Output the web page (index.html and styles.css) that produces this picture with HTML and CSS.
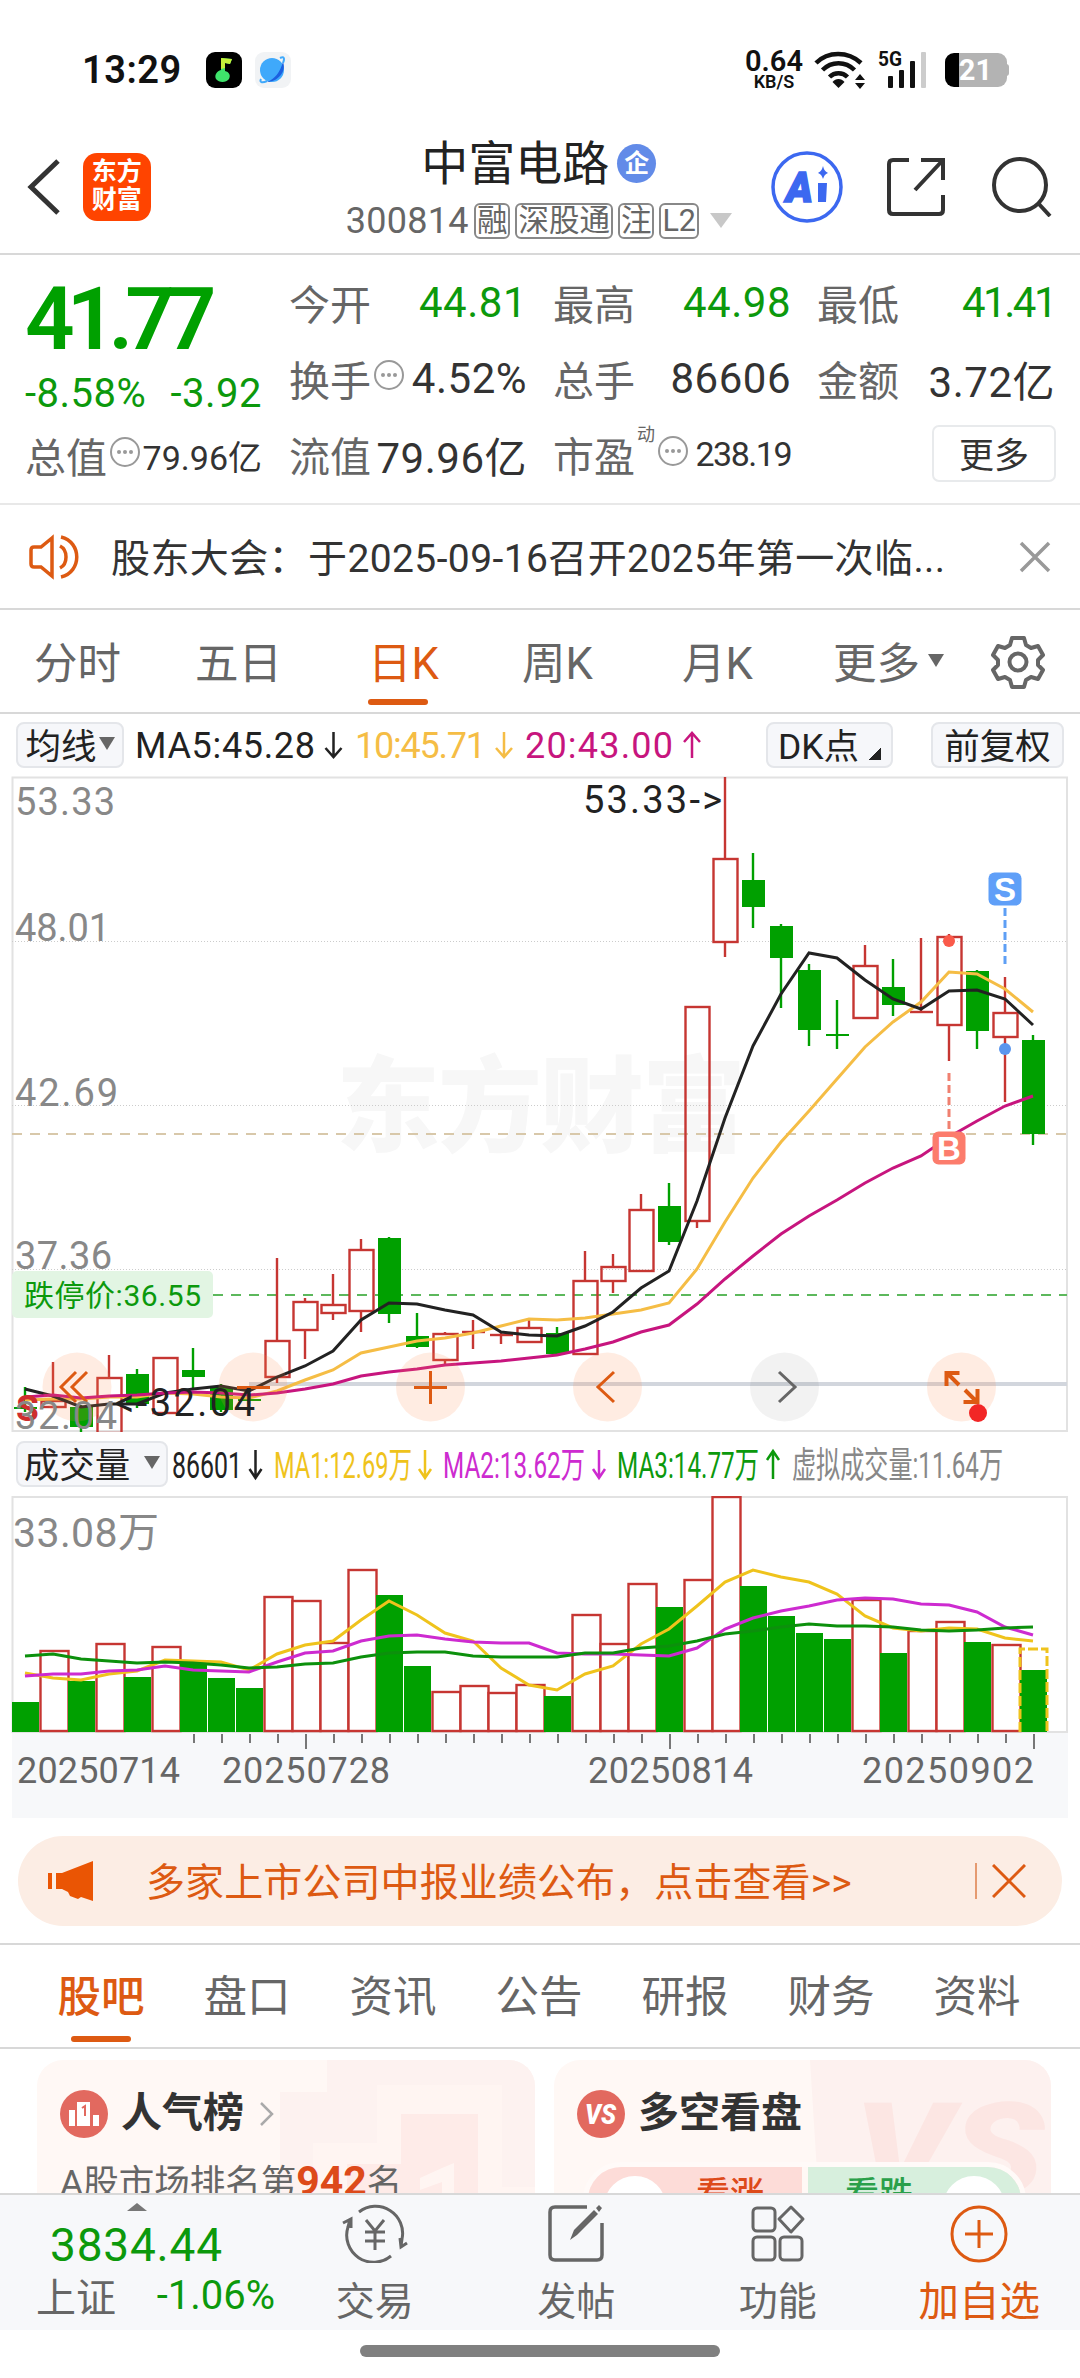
FILE: index.html
```html
<!DOCTYPE html>
<html lang="zh-CN">
<head>
  <meta charset="utf-8">
  <title>中富电路 300814</title>
  <meta name="viewport" content="width=device-width, initial-scale=1">
  <link rel="stylesheet" href="styles.css">
</head>
<body>
  <div class="status-bar">
    <span class="clock">13:29</span>
    <svg class="app-icon" width="36" height="36" viewBox="0 0 36 36"><rect width="36" height="36" rx="9" fill="#000"/><path d="M15 6l11 1-2 5-5-1v8c4 1 6 4 4 8-3 4-10 4-13 0-2-4 1-8 5-9z" fill="#3fe36b"/><path d="M15 6l11 1-2 5-5-1v5l-4 1z" fill="#c6f03a"/></svg>
    <svg class="app-icon" width="36" height="36" viewBox="0 0 36 36"><rect width="36" height="36" rx="9" fill="#f1f3f5"/><circle cx="17" cy="18" r="12" fill="#3fa9fb"/><path d="M28 10c4 10-6 20-16 20C20 27 25 20 28 10z" fill="#1c5fe0"/><path d="M6 27C4 31 8 31 12 29M25 6c4-2 5 0 3 5" stroke="#3fa9fb" stroke-width="2" fill="none"/></svg>
    <div class="net-speed"><b>0.64</b><span>KB/S</span></div>
    <svg class="wifi" width="52" height="38" viewBox="0 0 52 38" fill="none" stroke="#111" stroke-width="4.5"><path d="M2 12C14 0 34 0 47 12M8.500 19c9-9 23-9 32 0M15.500 26c5-5 13-5 18 0"/><path d="M24.500 37l-6-6c3-4 9-4 12 0z" fill="#111" stroke="none"/><path d="M41 29l5-6 5 6zM41 32h10l-5 6z" fill="#111" stroke="none"/></svg>
    <svg width="50" height="38" viewBox="0 0 50 38" fill="#111"><text x="0" y="15" class="net-type" textLength="24" lengthAdjust="spacingAndGlyphs">5G</text><rect x="10" y="25" width="5" height="12" rx="1"/><rect x="21" y="19" width="5" height="18" rx="1"/><rect x="32" y="10" width="5" height="27" rx="1"/><rect x="43" y="1" width="5" height="36" rx="1" fill="#ccc"/></svg>
    <div class="battery"><span>21</span></div>
  </div>

  <header class="header">
    <svg class="back" width="34" height="56" viewBox="0 0 34 56"><path d="M31 2L4 28l27 26" fill="none" stroke="#333" stroke-width="5"/></svg>
    <div class="logo">东方<br>财富</div>
    <div class="stock">
      <div class="stock-name">中富电路<span class="corp">企</span></div>
      <div class="stock-code"><span>300814</span><i>融</i><i>深股通</i><i>注</i><i>L2</i><em></em></div>
    </div>
    <svg class="ai" width="72" height="72" viewBox="0 0 72 72"><circle cx="36" cy="36" r="34" fill="none" stroke="#3c68f0" stroke-width="3.500"/><text x="15" y="51" textLength="27" lengthAdjust="spacingAndGlyphs">A</text><path d="M47 32h9l-1 19h-8zM52 15c1 4 2 5 5 7-3 1-4 3-5 6-1-3-2-5-5-6 3-2 4-3 5-7z" fill="#3c68f0"/></svg>
    <svg class="share" width="60" height="60" viewBox="0 0 60 60" fill="none" stroke="#333" stroke-width="4"><path d="M22 3H6q-4 0-4 4v46q0 4 4 4h46q4 0 4-4V38M34 3h22v20M56 3L28 33"/></svg>
    <svg width="60" height="60" viewBox="0 0 60 60" fill="none" stroke="#333" stroke-width="4"><circle cx="28" cy="28" r="26"/><path d="M46 46l12 13"/></svg>
  </header>

  <section class="quote">
    <div class="price-col">
      <div class="price">41.77</div>
      <div class="change"><span>-8.58%</span><span>-3.92</span></div>
      <div class="cell small"><label>总值</label><u class="tip"></u><b>79.96亿</b></div>
    </div>
    <div class="quote-grid">
      <div class="cell down"><label>今开</label><b>44.81</b></div>
      <div class="cell down"><label>最高</label><b>44.98</b></div>
      <div class="cell down narrow"><label>最低</label><b>41.41</b></div>
      <div class="cell"><label>换手</label><u class="tip"></u><b>4.52%</b></div>
      <div class="cell"><label>总手</label><b>86606</b></div>
      <div class="cell"><label>金额</label><b>3.72亿</b></div>
      <div class="cell"><label>流值</label><b>79.96亿</b></div>
      <div class="cell small pe"><label>市盈</label><sup>动</sup><u class="tip"></u><b>238.19</b></div>
      <div class="cell"><button class="more">更多</button></div>
    </div>
  </section>

  <div class="news">
    <svg width="52" height="46" viewBox="0 0 52 46" fill="none" stroke="#dd5a12" stroke-width="3.500"><path d="M23 4L12 13H5q-3 0-3 3v14q0 3 3 3h7l11 9z"/><path d="M31 12c8 4 8 18 0 22M32 3c21 5 21 35 0 40"/></svg>
    <p>股东大会：于2025-09-16召开2025年第一次临...</p>
    <svg class="close" width="32" height="32" viewBox="0 0 32 32"><path d="M2 2l28 28M30 2L2 30" stroke="#999" stroke-width="3.500"/></svg>
  </div>

  <nav class="period">
    <span>分时</span><span>五日</span><span class="on">日K</span><span>周K</span><span>月K</span><span>更多<em></em></span>
    <svg width="54" height="54" viewBox="0 0 54 54" fill="none" stroke="#666" stroke-width="4"><path d="M21 3h12l2 7 5 3 7-2 5 9-5 5v5l5 5-5 9-7-2-5 3-2 7H21l-2-7-5-3-7 2-5-9 5-5v-5l-5-5 5-9 7 2 5-3z" stroke-linejoin="round"/><circle cx="27" cy="27" r="8.500"/></svg>
  </nav>

  <div class="ma-row">
    <span class="btn ma-btn">均线<em></em></span>
    <svg width="590" height="62" viewBox="130 715 590 62">
      <text class="lg" fill="#222" x="135" y="759" textLength="180">MA5:45.28</text>
      <path class="arr" stroke="#222" d="M333.500 733v25m-8-9l8 9 8-9"/>
      <text class="lg" fill="#f5bd45" x="355" y="759" textLength="131">10:45.71</text>
      <path class="arr" stroke="#f5bd45" d="M504 733v25m-8-9l8 9 8-9"/>
      <text class="lg" fill="#c7157e" x="525" y="759" textLength="148">20:43.00</text>
      <path class="arr" stroke="#c7157e" d="M692 759v-25m-8 9l8-9 8 9"/>
    </svg>
    <span class="btn dk-btn">DK点<em></em></span>
    <span class="btn">前复权</span>
  </div>

  <svg id="kline" class="chart" width="1080" height="656" viewBox="0 776 1080 656">
    <text class="watermark" x="336" y="1144" textLength="410">东方财富</text>
    <path class="frame" d="M12.500 777.500H1067V1431H12.500z"/>
    <path class="grid" d="M12 941.500H1067M12 1105.500H1067M12 1269.500H1067"/>
    <path class="last-price" d="M12 1134H1067"/>
    <path class="limit-price" d="M213 1295H1067"/>
    <path d="M249 1384H1067" stroke="#d2d6dd" stroke-width="4"/>
    <g id="candles"></g>
    <g class="axis-label">
      <text x="15" y="815" textLength="100">53.33</text>
      <text x="15" y="941" textLength="95">48.01</text>
      <text x="15" y="1106" textLength="103">42.69</text>
      <text x="15" y="1269" textLength="97">37.36</text>
    </g>
    <rect x="12" y="1271" width="201" height="47" rx="5" fill="#e2f5e3"/>
    <text class="limit-text" x="24" y="1306" textLength="177">跌停价:36.55</text>
    <g class="tools">
      <circle cx="77" cy="1387" r="34.500"/><circle cx="253" cy="1387" r="34.500"/><circle cx="430.500" cy="1387" r="34.500"/><circle cx="607.500" cy="1387" r="34.500"/><circle class="off" cx="784.500" cy="1387" r="34.500"/><circle cx="961.500" cy="1387" r="34.500"/>
      <path d="M76 1372l-15 15 15 15M87 1372l-15 15 15 15M237 1387.500h33M414 1387.500h33M430.500 1371v33M614 1372l-16 15 16 15"/>
      <path stroke="#666" d="M779 1372l16 15-16 15"/>
      <path class="expand" d="M946.500 1386v-13h13M947 1373l12 12M977.500 1389v13h-14M977 1402l-12-12"/>
      <circle class="dot" cx="978" cy="1413" r="9"/>
    </g>
    <text class="s-mark" x="16" y="1421">S</text>
    <g class="axis-label"><text x="15" y="1429" textLength="102">32.04</text></g>
    <g class="peak"><text x="583" y="813" textLength="139">53.33-&gt;</text><text x="115" y="1416" textLength="140">&lt;-32.04</text></g>
    <g class="signal">
      <path stroke="#5e9ff5" d="M1005 908v57"/><path stroke="#f08070" d="M949 1073v58"/>
      <rect x="988.500" y="872.500" width="33" height="33" rx="6" fill="#5f9ff8"/><text x="1005" y="901">S</text>
      <rect x="932.500" y="1131.500" width="33" height="33" rx="6" fill="#fc7c6c"/><text x="949" y="1160">B</text>
      <circle cx="949" cy="941" r="6" fill="#fa5a4a"/><circle cx="1005" cy="1049" r="6" fill="#5a96ee"/>
    </g>
  </svg>

  <div class="vol-row">
    <span class="btn vol-btn">成交量<em></em></span>
    <svg width="850" height="64" viewBox="168 1433 850 64">
      <g class="lg">
        <text fill="#222" x="172" y="1479" textLength="70" lengthAdjust="spacingAndGlyphs">86601</text>
        <path class="arr" stroke="#222" d="M255.500 1451v28m-6-9l6 9 6-9"/>
        <text fill="#efc31c" x="274" y="1479" textLength="138" lengthAdjust="spacingAndGlyphs">MA1:12.69万</text>
        <path class="arr" stroke="#efc31c" d="M425 1451v28m-6-9l6 9 6-9"/>
        <text fill="#cd2bd0" x="443" y="1479" textLength="142" lengthAdjust="spacingAndGlyphs">MA2:13.62万</text>
        <path class="arr" stroke="#cd2bd0" d="M599 1451v28m-6-9l6 9 6-9"/>
        <text fill="#0c990c" x="617" y="1479" textLength="142" lengthAdjust="spacingAndGlyphs">MA3:14.77万</text>
        <path class="arr" stroke="#0c990c" d="M773 1480v-28m-6 9l6-9 6 9"/>
        <text fill="#888" x="792" y="1479" textLength="211" lengthAdjust="spacingAndGlyphs">虚拟成交量:11.64万</text>
      </g>
    </svg>
  </div>

  <svg id="volume" class="chart" width="1080" height="322" viewBox="0 1497 1080 322">
    <rect x="12" y="1734" width="1056" height="85" fill="#f7f8fa"/>
    <path class="frame" d="M12.500 1498H1067V1733H12.500z"/>
    <g id="bars"></g>
    <path d="M1020 1733V1650H1047V1733" fill="none" stroke="#efc31c" stroke-width="3" stroke-dasharray="10 3"/>
    <g class="axis-label vol-max"><text x="13" y="1548" textLength="146">33.08万</text></g>
    <g class="date">
      <text x="17" y="1784" textLength="163">20250714</text>
      <text x="222" y="1784" textLength="168">20250728</text>
      <text x="588" y="1784" textLength="165">20250814</text>
      <text x="862" y="1784" textLength="172">20250902</text>
    </g>
  </svg>

  <div class="banner">
    <svg width="46" height="40" viewBox="0 0 46 40" fill="#ea5504"><path d="M0 12h4v16H0zM8 12h6L45 0v40l-12-4-3 2-8-3-2-4-6-3H8z"/></svg>
    <p>多家上市公司中报业绩公布，点击查看&gt;&gt;</p>
    <i></i>
    <svg width="34" height="34" viewBox="0 0 34 34"><path d="M1 1l32 32M33 1L1 33" stroke="#dd5a12" stroke-width="3"/></svg>
  </div>

  <nav class="sections">
    <span class="on">股吧</span><span>盘口</span><span>资讯</span><span>公告</span><span>研报</span><span>财务</span><span>资料</span>
  </nav>

  <div class="cards">
    <div class="card">
      <svg class="card-bg" width="498" height="160" viewBox="0 0 498 160"><path d="M290 0h208v160H243V32h47z" fill="#fdf2f0"/><path d="M276 160V83h64V25h125v102h33v33z" fill="#fff5f2"/><path d="M310 160v-56h54V54h77v106z" fill="#feebe8"/><path d="M405 108l12-5v57h-12v-38l-22 8v-12z" fill="#fff5f2"/></svg>
      <div class="card-title">
        <svg width="48" height="48" viewBox="0 0 48 48"><circle cx="24" cy="24" r="24" fill="#e2695f"/><path d="M9 20h6v16H9zM17 12h13v24H17zM33 25h6v11h-6z" fill="#fff"/><path d="M22 18l3-2v10" stroke="#e2695f" stroke-width="2" fill="none"/></svg>
        <b>人气榜</b>
        <svg width="16" height="26" viewBox="0 0 16 26"><path d="M2 2l11 11L2 24" fill="none" stroke="#aaa" stroke-width="2.500"/></svg>
      </div>
      <p>A股市场排名第<strong>942</strong>名</p>
    </div>
    <div class="card">
      <svg class="card-bg" width="498" height="160" viewBox="0 0 498 160"><path d="M256 0h242v160H266z" fill="#fdf1ef"/><text x="300" y="135" textLength="190" lengthAdjust="spacingAndGlyphs">VS</text></svg>
      <div class="card-title">
        <svg width="48" height="48" viewBox="0 0 48 48"><circle cx="24" cy="24" r="24" fill="#e2695f"/><text class="vs" x="8" y="34" textLength="31" lengthAdjust="spacingAndGlyphs">VS</text></svg>
        <b>多空看盘</b>
      </div>
      <div class="vote"><div class="up">看涨</div><div class="dn">看跌</div></div>
    </div>
  </div>

  <footer class="toolbar">
    <div class="index">
      <em></em>
      <b>3834.44</b>
      <div><span>上证</span><i>-1.06%</i></div>
    </div>
    <div class="tool">
      <svg width="66" height="60" viewBox="0 0 66 60" fill="none" stroke="#666" stroke-width="3"><path d="M17 9a27 27 0 0 1 43 27l-1 7M49 53A27 27 0 0 1 6 24l2-8M1 20l8-4v9M65 40l-6 4-1-9M24 17l9 11 9-11M33 28v19M23 29h20M23 38h20"/></svg>
      <span>交易</span>
    </div>
    <div class="tool">
      <svg width="58" height="60" viewBox="0 0 58 60" fill="none" stroke="#666" stroke-width="3.500"><path d="M40 4H8q-5 0-5 5v43q0 5 5 5h42q5 0 5-5V20"/><path d="M23 37l4-10L47 7l4 4-21 21zM49 5l3-3 3 3-3 4z" fill="#666" stroke="none"/></svg>
      <span>发帖</span>
    </div>
    <div class="tool">
      <svg width="56" height="60" viewBox="0 0 56 60" fill="none" stroke="#666" stroke-width="3"><rect x="3" y="5" width="22" height="23" rx="4"/><rect x="3" y="34" width="22" height="23" rx="4"/><rect x="30" y="34" width="22" height="23" rx="4"/><path d="M41 4l12 12-12 13-12-13z" stroke-linejoin="round"/></svg>
      <span>功能</span>
    </div>
    <div class="tool add">
      <svg width="60" height="60" viewBox="0 0 60 60" fill="none" stroke="#dd5a12" stroke-width="3"><circle cx="30" cy="31" r="27"/><path d="M30 17v28M16 31h28"/></svg>
      <span>加自选</span>
    </div>
  </footer>
  <div class="home-bar"></div>
  <script src="chart.js"></script>
</body>
</html>
```

FILE: styles.css
```css
* {box-sizing: border-box;}
body {margin: 0; width: 1080px; height: 2378px; overflow: hidden; background: #fff; color: #333; font-family: Roboto, "Noto Sans CJK SC", sans-serif;}
p {margin: 0;}
svg {display: block; flex: none;}
i, em {font-style: normal;}

.status-bar {display: flex; align-items: center; height: 140px; padding: 0 73px 0 82px; color: #111;}
.clock {width: 124px; font-size: 38px; font-weight: 600; letter-spacing: 0.5px;}
.app-icon {margin-right: 13px;}
.net-speed {display: flex; flex-direction: column; align-items: center; width: 62px; margin-left: auto; line-height: 1;}
.net-speed b {font-size: 29px; font-weight: 600; line-height: 28px; margin-top: -4px;}
.net-speed span {font-size: 18px; font-weight: 600; line-height: 14px;}
.wifi {margin: 0 12px 0 9px;}
.net-type {font-size: 20px; font-weight: 700;}
.battery {display: flex; align-items: center; justify-content: center; width: 62px; height: 34px; margin-left: 17px; border-radius: 9px; background: linear-gradient(90deg, #000 14px, #b3b3b3 14px); color: #fff; font-size: 29px; font-weight: 700;}
.battery::after {content: ""; width: 4px; height: 12px; margin-right: -16px; margin-left: 13px; border-radius: 0 3px 3px 0; background: #b3b3b3;}

.header {display: flex; align-items: center; height: 115px; padding: 0 28px 20px 27px; border-bottom: 2px solid #d8d8d8;}
.logo {width: 68px; height: 68px; margin-left: 22px; border-radius: 14px; background: #ff4400; color: #fff; font-size: 25px; font-weight: 700; line-height: 28px; text-align: center; padding-top: 5px;}
.stock {display: flex; flex-direction: column; align-items: center; width: 394px; margin: 0 36px 0 192px; padding-top: 12px;}
.stock-name {display: flex; align-items: center; height: 56px; font-size: 47px; color: #222; line-height: 56px;}
.corp {display: flex; align-items: center; justify-content: center; width: 39px; height: 39px; margin-left: 8px; border-radius: 50%; background: #628be8; color: #fff; font-size: 25px; font-weight: 700;}
.stock-code {display: flex; align-items: center; height: 58px; color: #666; font-size: 36px; gap: 5px;}
.stock-code span {letter-spacing: 0.3px;}
.stock-code i {height: 36px; padding: 0 1px; border: 2px solid #888; border-radius: 6px; font-size: 30.500px; line-height: 31px; white-space: nowrap;}
.stock-code em {margin-left: 6px; border: 11px solid transparent; border-top: 15px solid #c8c8c8; border-bottom: 0;}
.ai text {fill: #3c68f0; stroke: #3c68f0; stroke-width: 1.500; font: italic 900 42px Roboto;}
.share {margin: 0 45px 0 44px;}

.quote {display: flex; height: 250px; padding: 11px 25px 0; border-bottom: 2px solid #e8e8e8;}
.price-col {width: 237px; margin-right: 27px;}
.price {height: 96px; color: #00a000; font-size: 87px; font-weight: 600; line-height: 106px; letter-spacing: -8px;}
.change {display: flex; justify-content: space-between; height: 56px; color: #0c990c; font-size: 40px; line-height: 64px; letter-spacing: 0.5px;}
.quote-grid {display: grid; grid-template-columns: repeat(3, 238px); grid-auto-rows: 76px; column-gap: 26px;}
.cell {display: flex; align-items: center; height: 72px;}
.price-col .cell {height: 74px;}
.cell label {color: #666; font-size: 41px;}
.cell b {margin-left: auto; font-size: 42px; font-weight: 400; letter-spacing: 0.5px; white-space: nowrap;}
.narrow b {letter-spacing: -2.500px;}
.down b {color: #0c990c;}
.small b {font-size: 34px; letter-spacing: 0;}
.pe b {letter-spacing: -1.500px;}
.cell sup {align-self: flex-start; margin-left: 2px; color: #666; font-size: 18px; line-height: 34px;}
.tip {display: flex; align-items: center; justify-content: center; width: 30px; height: 30px; margin: -6px 0 0 3px; border: 2px solid #999; border-radius: 50%; text-decoration: none;}
.tip::after {content: ""; width: 4px; height: 4px; border-radius: 50%; background: #999; box-shadow: -6px 0 #999, 6px 0 #999;}
.more {width: 124px; height: 57px; margin: 0 -1px 2px auto; border: 2px solid #e8eaec; border-radius: 7px; background: #fff; color: #333; font: 35px "Noto Sans CJK SC"; line-height: 48px;}

.news {display: flex; align-items: center; height: 105px; padding: 0 29px; border-bottom: 2px solid #d8d8d8; font-size: 39px;}
.news p {margin: -3px 0 0 30px; letter-spacing: 0.4px; white-space: nowrap;}
.close {margin-left: auto;}

.period {display: grid; grid-template-columns: 161px 173px 154px 160px 151px 158px 54px; align-items: center; height: 104px; padding-left: 34px; border-bottom: 2px solid #d8d8d8; color: #666; font-size: 43.500px;}
.period span {display: flex; align-items: center; height: 104px; padding-bottom: 3px;}
.period em, .btn em {margin-left: 8px; border: 8px solid transparent; border-top: 13px solid #666; border-bottom: 0;}
.period .on, .sections .on {position: relative; color: #dd5a12;}
.period .on::after, .sections .on::after {content: ""; position: absolute; left: 0; bottom: 9px; width: 60px; height: 6px; border-radius: 3px; background: #dd5a12;}

.btn {display: flex; align-items: center; justify-content: center; height: 46px; padding-bottom: 3px; border: 2px solid #e4e6ea; border-radius: 8px; background: #f6f7fa; color: #222; font-size: 35.500px; white-space: nowrap;}
.ma-row {display: flex; align-items: center; height: 62px; padding: 0 16px;}
.ma-row .btn {width: 133px;}
.ma-row .ma-btn {width: 108px; margin-right: 6px;}
.ma-btn em {margin-left: 2px;}
.ma-row .dk-btn {width: 127px; margin-left: 46px; margin-right: 38px;}
.dk-btn em {align-self: flex-end; margin: 0 0 3px 10px; border: solid transparent; border-width: 12px 0 0 12px; background: linear-gradient(135deg, transparent 50%, #222 50%) border-box;}
.lg {font-size: 36px;}
.arr {fill: none; stroke-width: 2.500;}

.frame {fill: none; stroke: #e2e2e2; stroke-width: 2;}
.grid {stroke: #ccc; stroke-dasharray: 1 2;}
.last-price {stroke: #d8c8aa; stroke-width: 2; stroke-dasharray: 10 8;}
.limit-price {stroke: #5cb85c; stroke-width: 2; stroke-dasharray: 10 8;}
.watermark {fill: #f7f7f7; font-size: 104px; font-weight: 900;}
.axis-label {fill: #888; font-size: 38px;}
.vol-max {font-size: 41px;}
.limit-text {fill: #0c990c; font-size: 30px;}
.peak {fill: #222; font-size: 38px;}
.s-mark {fill: #cf2d2d; font-size: 37px; font-weight: 700;}
.tools circle {fill: #ff8a4a; fill-opacity: 0.160;}
.tools .off {fill: #000; fill-opacity: 0.050;}
.tools .dot {fill: #f22626; fill-opacity: 1;}
.tools path {fill: none; stroke: #dd5a12; stroke-width: 3;}
.tools path[stroke] {stroke: #666;}
.tools .expand {stroke-width: 4;}
.signal path {stroke-width: 3; stroke-dasharray: 8 4;}
.signal text {fill: #fff; font: 700 33px "Liberation Sans"; text-anchor: middle;}
.date {fill: #666; font-size: 36px;}

.vol-row {display: flex; align-items: center; height: 64px; padding-left: 16px;}
.vol-btn {width: 152px;}
.vol-btn em {margin-left: 14px;}

.banner {display: flex; align-items: center; height: 90px; margin: 18px 18px 17px; padding: 0 36px 0 30px; border-radius: 45px; background: #fcede4; color: #dd5a12; font-size: 39px;}
.banner p {margin: -4px 0 0 52px; letter-spacing: 0.1px; white-space: nowrap;}
.banner i {width: 2px; height: 36px; margin-left: auto; margin-right: 15px; background: #e59a70;}

.sections {display: grid; grid-template-columns: repeat(7, 146px); height: 106px; padding-left: 28px; border: solid #d8d8d8; border-width: 2px 0; color: #666; font-size: 43.500px; line-height: 106px; text-align: center;}
.sections .on {font-weight: 500;}
.sections .on::after {left: 43px;}

.cards {display: grid; grid-template-columns: 498px 497px; gap: 19px; height: 144px; padding: 11px 0 0 37px; overflow: hidden;}
.card {position: relative; height: 180px; padding: 30px 23px 0; border-radius: 26px; background: #fff8f5; overflow: hidden;}
.card-bg {position: absolute; left: 0; top: 0;}
.card-bg text {fill: #fce6e3; font: italic 900 130px Roboto;}
.card-title {position: relative; display: flex; align-items: center; height: 48px; font-size: 41px; line-height: 44px;}
.card-title b {margin: -3px 15px 0 13px;}
.vs {fill: #fff; font: italic 900 28px Roboto;}
.card p {position: relative; margin: 16px 0 0; color: #666; font-size: 35.500px; white-space: nowrap;}
.card strong {color: #dd4a1a; font-size: 41px;}
.vote {position: relative; display: flex; gap: 6px; width: 443px; height: 76px; margin: 24px 0 0 6px; border: 5px solid #fffaf8; border-radius: 38px; overflow: hidden; font-size: 34px; font-weight: 500; line-height: 54px;}
.vote div {display: flex; flex: 1; gap: 30px;}
.vote div::before {content: ""; width: 62px; height: 62px; margin: 9px 0 0 16px; border-radius: 50%; background: #fff;}
.vote .up {background: #fddcd8; color: #dd4a1a;}
.vote .dn {flex-direction: row-reverse; background: #d7efdd; color: #2aa04a;}
.vote .dn::before {margin: 9px 16px 0 0;}

.toolbar {display: flex; height: 137px; border-top: 2px solid #d8d8d8; background: #f7f8fa;}
.index {width: 274px; padding: 8px 0 0 36px; color: #0c990c;}
.index em {display: block; width: 0; margin-left: 91px; border: 10px solid transparent; border-top: 0; border-bottom: 8px solid #777;}
.index b {display: block; padding-left: 14px; font-size: 46px; font-weight: 400; line-height: 68px; letter-spacing: 0.8px;}
.index div {display: flex; align-items: center; justify-content: space-between; height: 32px; width: 239px; font-size: 40px;}
.index span {color: #666; font-size: 40px;}
.tool {display: flex; flex-direction: column; align-items: center; width: 202px; padding-top: 8px; color: #666; font-size: 39px; line-height: 78px;}
.add {color: #dd5a12; font-size: 40.500px;}
.home-bar {width: 360px; height: 12px; margin: 15px auto 0; border-radius: 6px; background: #808080;}
```

FILE: chart.js
```js
var RED = '#c63632', GREEN = '#00a000';

// [up, high, bodyTop, bodyBottom, low]
var candles = [
  [0, 1387, 1407, 1409, 1412], [1, 1362, 1401, 1407, 1407], [0, 1405, 1407, 1427, 1432],
  [1, 1355, 1378, 1433, 1433], [0, 1369, 1374, 1404, 1408], [1, 1358, 1358, 1413, 1413],
  [0, 1348, 1370, 1377, 1388], [0, 1384, 1387, 1410, 1412], [0, 1396, 1399, 1401, 1404],
  [1, 1258, 1341, 1377, 1383], [1, 1298, 1302, 1330, 1359], [1, 1274, 1305, 1313, 1320],
  [1, 1239, 1250, 1311, 1332], [0, 1237, 1238, 1314, 1323], [0, 1313, 1336, 1347, 1348],
  [1, 1332, 1334, 1360, 1364], [1, 1320, 1332, 1332, 1349], [1, 1332, 1335, 1335, 1344],
  [1, 1318, 1328, 1342, 1342], [0, 1327, 1333, 1354, 1354], [1, 1251, 1281, 1354, 1354],
  [1, 1254, 1267, 1281, 1293], [1, 1194, 1210, 1271, 1271], [0, 1183, 1206, 1242, 1245],
  [1, 1007, 1007, 1221, 1228], [1, 777, 859, 942, 957], [0, 853, 880, 907, 928],
  [0, 924, 926, 958, 1008], [0, 964, 970, 1030, 1046], [0, 1000, 1034, 1036, 1049],
  [1, 945, 966, 1018, 1018], [0, 959, 987, 1005, 1016], [1, 938, 1012, 1012, 1013],
  [1, 934, 937, 1025, 1061], [0, 970, 971, 1031, 1049], [1, 977, 1013, 1037, 1102],
  [0, 1035, 1040, 1134, 1145]
];
var ma5 = [1389,1396,1407,1404,1404,1393,1389,1386,1391,1377,1366,1351,1320,1303,1304,1310,1315,1332,1335,1336,1326,1312,1288,1271,1201,1118,1046,994,953,958,980,999,1009,991,990,999,1025];
var ma10 = [1400,1399,1399,1397,1397,1393,1394,1397,1398,1391,1380,1370,1353,1347,1341,1338,1333,1326,1319,1320,1318,1314,1310,1303,1269,1222,1178,1142,1111,1079,1047,1022,1002,972,974,989,1012];
var ma20 = [1397,1395,1398,1396,1395,1393,1392,1393,1395,1393,1389,1384,1376,1372,1369,1365,1363,1361,1358,1355,1349,1342,1332,1325,1304,1279,1256,1234,1216,1200,1183,1168,1156,1137,1121,1106,1096];

var volTop = [1703,1652,1682,1645,1678,1648,1663,1679,1689,1598,1602,1644,1571,1596,1667,1693,1687,1694,1686,1697,1616,1645,1585,1608,1581,1498,1587,1617,1634,1640,1601,1654,1632,1623,1643,1646,1671];
var volMa1 = [1674,1679,1681,1675,1672,1661,1662,1663,1671,1655,1646,1642,1621,1602,1616,1634,1642,1669,1686,1691,1675,1667,1645,1630,1607,1583,1571,1578,1583,1595,1617,1629,1632,1629,1630,1639,1642];
var volMa2 = [1677,1675,1675,1672,1671,1667,1671,1672,1673,1663,1654,1652,1642,1637,1636,1640,1643,1644,1644,1654,1655,1655,1656,1657,1649,1630,1619,1612,1607,1601,1599,1600,1605,1606,1613,1628,1636];
var volMa3 = [1657,1655,1660,1662,1664,1663,1664,1666,1669,1668,1665,1664,1658,1654,1653,1653,1657,1658,1658,1658,1654,1654,1649,1647,1642,1635,1632,1628,1625,1627,1627,1628,1631,1632,1631,1629,1628];

function rect(x, y, w, h, fill, stroke) {
  return '<rect x="' + x + '" y="' + y + '" width="' + w + '" height="' + h + '" fill="' + fill + '" stroke="' + stroke + '" stroke-width="2.4"/>';
}
function vline(x, y1, y2, color, w) {
  return '<path d="M' + x + ' ' + y1 + 'V' + y2 + '" stroke="' + color + '" stroke-width="' + w + '"/>';
}
function line(data, color) {
  var pts = data.map(function (y, i) { return (25 + i * 28) + ',' + y; });
  return '<polyline points="' + pts.join(' ') + '" fill="none" stroke="' + color + '" stroke-width="3"/>';
}

var k = '', v = '';
candles.forEach(function (c, i) {
  var x = 25 + i * 28, color = c[0] ? RED : GREEN;
  k += vline(x, c[1], c[2], color, 2.4) + vline(x, c[3], c[4], color, 2.4);
  if (c[0]) {
    // open equals close: a single stroke
    if (c[2] === c[3]) k += '<path d="M' + (x - 11) + ' ' + c[2] + 'h23" stroke="' + RED + '" stroke-width="2.4"/>';
    else k += rect(x - 11.5, c[2], 24, c[3] - c[2], 'none', RED);
    v += rect(13 + i * 28 - 0.5, volTop[i], 28, 1732 - volTop[i], '#fff', RED);
  } else {
    k += '<rect x="' + (x - 11) + '" y="' + c[2] + '" width="23" height="' + (c[3] - c[2]) + '" fill="' + GREEN + '"/>';
    v += '<rect x="' + (12 + i * 28) + '" y="' + volTop[i] + '" width="27" height="' + (1733 - volTop[i]) + '" fill="' + GREEN + '"/>';
  }
  // day ticks, long ones carry a date
  if (i > 5) v += vline(26 + i * 28, 1735, i % 13 === 10 ? 1750 : 1744, '#777', 2);
});
document.getElementById('candles').innerHTML = k + line(ma10, '#f5bd45') + line(ma5, '#222') + line(ma20, '#c7157e');
document.getElementById('bars').innerHTML = v + line(volMa1, '#efc31c') + line(volMa2, '#cd2bd0') + line(volMa3, '#0c900c');
```
